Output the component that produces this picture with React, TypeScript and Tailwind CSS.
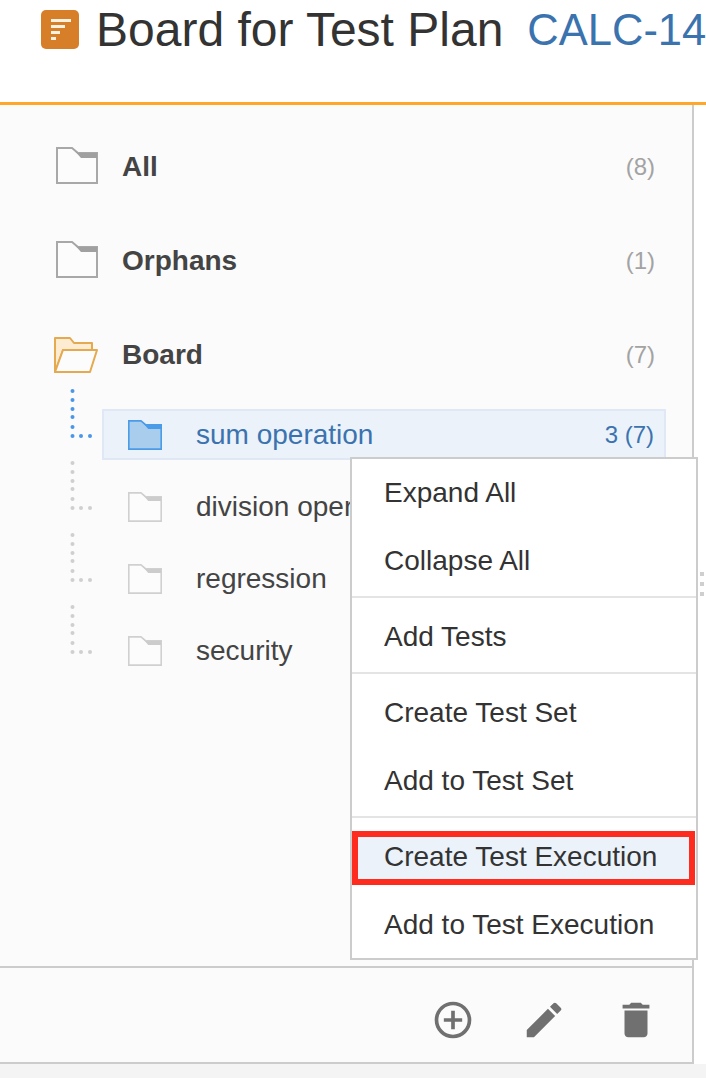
import { MdAddCircleOutline, MdDelete, MdEdit } from "react-icons/md";

const FolderIcon = ({ className, stroke, fill, band }: { className: string; stroke: string; fill: string; band: string }) => (
  <svg viewBox="0 0 42 37" className={className}>
    <path d="M1 1H16L22 6H41V36H1Z" fill={fill} stroke={stroke} strokeWidth="2" />
    <path d="M16 1L22 6H41V11H25Z" fill={band} />
  </svg>
);

const OpenFolderIcon = () => (
  <svg viewBox="0 0 44 36" className="w-[44px] h-[36px] shrink-0 -mt-px">
    <path d="M1 35V1H16L20 6H38V13H9L1 35Z" fill="#fdecd2" stroke="#e5a94f" strokeWidth="2" strokeLinejoin="round" />
    <path d="M1 35L9 13H43L36 35Z" fill="#fcfcfc" stroke="#e5a94f" strokeWidth="2" strokeLinejoin="round" />
  </svg>
);

const Connector = ({ color }: { color: string }) => (
  <svg viewBox="0 0 24 50" className="w-[24px] h-[50px] shrink-0 self-start -mt-[20px]">
    {[2, 11, 20, 28, 38, 47].map((y) => (
      <circle key={y} cx="2.5" cy={y} r="2" fill={color} />
    ))}
    <circle cx="11" cy="47" r="2" fill={color} />
    <circle cx="20" cy="47" r="2" fill={color} />
  </svg>
);

const TopRow = ({ label, count, open }: { label: string; count: string; open?: boolean }) => (
  <div className="flex items-center h-[72px]">
    <div className="w-[68px] shrink-0">
      {open ? (
        <OpenFolderIcon />
      ) : (
        <FolderIcon className="w-[42px] h-[37px] ml-[2px] -mt-[3px]" stroke="#a8a8a8" fill="#fcfcfc" band="#a0a0a0" />
      )}
    </div>
    <span className="text-[28px] font-bold text-[#444444]">{label}</span>
    <span className="ml-auto text-[24px] text-[#a3a3a3]">{count}</span>
  </div>
);

const ChildRow = ({ label }: { label: string }) => (
  <div className="flex items-center h-[51px]">
    <Connector color="#cfcfcf" />
    <div className="flex items-center flex-1 h-full ml-[8px] pl-[24px] pr-[10px] border-2 border-transparent">
      <FolderIcon className="w-[34px] h-[30px] shrink-0" stroke="#d0d0d0" fill="#fcfcfc" band="#cccccc" />
      <span className="ml-[34px] text-[28px] text-[#444444] whitespace-nowrap">{label}</span>
    </div>
  </div>
);

const MenuItem = ({ label }: { label: string }) => (
  <div className="flex items-center h-[68px] pl-[32px] text-[28px] text-[#333333] whitespace-nowrap">{label}</div>
);

export default function App() {
  return (
    <div className="relative w-[706px] h-[1078px] overflow-hidden bg-white font-['Liberation_Sans',Arial,sans-serif]">
      {/* Header */}
      <header className="flex items-start h-[102px] pl-[41px] pt-[10px] overflow-hidden whitespace-nowrap">
        <div className="flex flex-col justify-center gap-[3px] w-[38px] h-[39px] pl-[10px] rounded-[5px] bg-[#d67f28] shrink-0">
          <div className="w-[20px] h-[3px] bg-[#fdf1e0]" />
          <div className="w-[14px] h-[3px] bg-[#fdf1e0]" />
          <div className="w-[9px] h-[3px] bg-[#fdf1e0]" />
          <div className="w-[5px] h-[3px] bg-[#fdf1e0]" />
        </div>
        <h1 className="ml-[17px] -mt-[7px] text-[48px] leading-[54px] text-[#333333]">Board for Test Plan</h1>
        <a className="ml-[24px] -mt-[3px] text-[43.5px] leading-[46px] text-[#3b73af]">CALC-14</a>
      </header>
      <div className="h-[3px] bg-[#ffa62b]" />

      {/* Tree panel */}
      <div className="w-[694px] h-[959px] flex flex-col bg-[#fbfbfb] border-r-2 border-[#cccccc] border-b-2">
        <div className="flex-1 pl-[54px] pr-[37px] pt-[26px]">
          <div className="flex flex-col gap-[22px]">
            <TopRow label="All" count="(8)" />
            <TopRow label="Orphans" count="(1)" />
            <TopRow label="Board" count="(7)" open />
          </div>
          <div className="flex flex-col gap-[21px] mt-[18px] ml-[16px] -mr-[11px]">
            <div className="flex items-center h-[51px]">
              <Connector color="#4a97e8" />
              <div className="flex items-center flex-1 h-full ml-[8px] pl-[24px] pr-[10px] border-2 border-[#dfe8f4] bg-[#ebf2fa]">
                <FolderIcon className="w-[34px] h-[30px] shrink-0" stroke="#4a9be8" fill="#a9cdec" band="#4a9be8" />
                <span className="ml-[34px] text-[28px] text-[#3b73af] whitespace-nowrap">sum operation</span>
                <span className="ml-auto text-[24px] text-[#3b73af]">3 (7)</span>
              </div>
            </div>
            <ChildRow label="division operation" />
            <ChildRow label="regression" />
            <ChildRow label="security" />
          </div>
        </div>

        {/* Footer actions */}
        <div className="flex items-center justify-end h-[96px] pt-[10px] border-t-2 border-[#cccccc] text-[#707070]">
          <MdAddCircleOutline className="w-[44px] h-[44px]" />
          <MdEdit className="w-[46px] h-[46px] ml-[46px]" />
          <MdDelete className="w-[46px] h-[46px] ml-[46px] mr-[33px]" />
        </div>
      </div>
      <div className="h-[14px] bg-[#f4f4f4]" />

      {/* Splitter handle */}
      <div className="absolute left-[700px] top-[572px] flex flex-col gap-[6px]">
        <div className="w-[4px] h-[4px] bg-[#cfcfcf]" />
        <div className="w-[4px] h-[4px] bg-[#cfcfcf]" />
        <div className="w-[4px] h-[4px] bg-[#cfcfcf]" />
      </div>

      {/* Context menu */}
      <div className="absolute left-[350px] top-[457px] w-[348px] h-[503px] bg-white border-2 border-[#cccccc]">
        <div className="pb-px border-b-2 border-[#e4e4e4]">
          <MenuItem label="Expand All" />
          <MenuItem label="Collapse All" />
        </div>
        <div className="pt-[5px] pb-px border-b-2 border-[#e4e4e4]">
          <MenuItem label="Add Tests" />
        </div>
        <div className="pt-[5px] pb-px border-b-2 border-[#e4e4e4]">
          <MenuItem label="Create Test Set" />
          <MenuItem label="Add to Test Set" />
        </div>
        <div className="pt-[13px]">
          <div className="flex items-center h-[54px] mr-px mb-[6px] pl-[26px] pb-[3px] border-[6px] border-[#fe2b1f] bg-[#ebf2fa] text-[28px] text-[#333333] whitespace-nowrap">
            Create Test Execution
          </div>
          <MenuItem label="Add to Test Execution" />
        </div>
      </div>
    </div>
  );
}
